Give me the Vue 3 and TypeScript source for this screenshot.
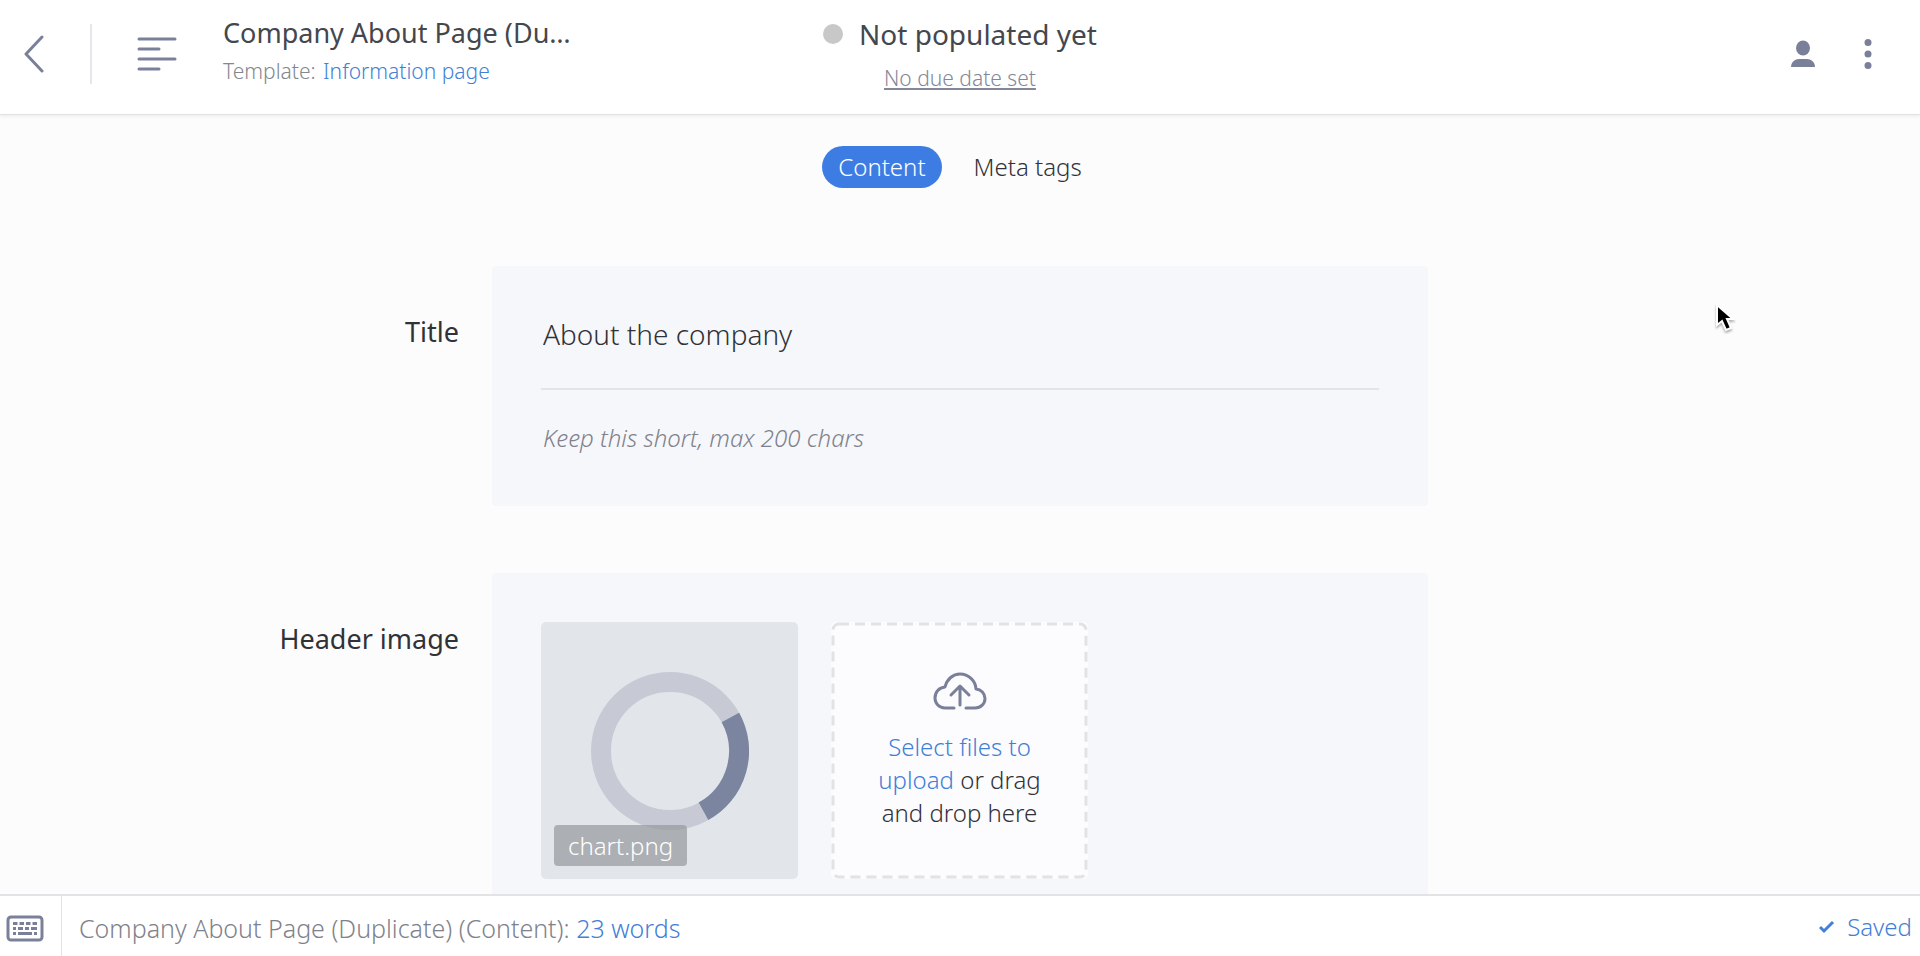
<script setup lang="ts">
import { ref } from 'vue'

type TabId = 'content' | 'meta'

interface Tab {
  id: TabId
  label: string
}

const tabs: Tab[] = [
  { id: 'content', label: 'Content' },
  { id: 'meta', label: 'Meta tags' },
]

const activeTab = ref<TabId>('content')
const pageName = 'Company About Page (Duplicate)'
const title = ref('About the company')
const fileName = 'chart.png'
const wordCount = 23
</script>

<template>
  <div class="app">
    <header class="topbar">
      <div class="topbar-left">
        <button class="icon-button back" type="button" aria-label="Back">
          <svg width="20" height="38" viewBox="0 0 20 38" fill="none" stroke="currentColor" stroke-width="3" stroke-linecap="round" stroke-linejoin="round">
            <path d="M18 2 2 19l16 17" />
          </svg>
        </button>
        <span class="divider"></span>
        <button class="icon-button menu" type="button" aria-label="Page list">
          <svg width="40" height="36" viewBox="0 0 40 36" fill="none" stroke="currentColor" stroke-width="3" stroke-linecap="round">
            <path d="M2 3h36M2 13h20M2 23h36M2 33h20" />
          </svg>
        </button>
        <div class="page-info">
          <h1 class="page-name">{{ pageName }}</h1>
          <p class="template">Template: <a href="#template">Information page</a></p>
        </div>
      </div>

      <div class="status">
        <button class="status-name" type="button"><span class="dot"></span>Not populated yet</button>
        <a class="due" href="#due">No due date set</a>
      </div>

      <div class="topbar-right">
        <button class="icon-button" type="button" aria-label="Assigned people">
          <svg width="24" height="28" viewBox="0 0 24 28" fill="currentColor">
            <ellipse cx="12" cy="8" rx="7" ry="7.5" />
            <path d="M0 27c0-5 4-8 8-8h8c4 0 8 3 8 8z" />
          </svg>
        </button>
        <button class="icon-button" type="button" aria-label="More options">
          <svg width="8" height="32" viewBox="0 0 8 32" fill="currentColor">
            <circle cx="4" cy="4.5" r="3.5" />
            <circle cx="4" cy="16" r="3.5" />
            <circle cx="4" cy="27.5" r="3.5" />
          </svg>
        </button>
      </div>
    </header>

    <main class="content">
      <nav class="tabs">
        <button
          v-for="tab in tabs"
          :key="tab.id"
          type="button"
          class="tab"
          :class="{ active: tab.id === activeTab }"
          @click="activeTab = tab.id"
        >{{ tab.label }}</button>
      </nav>

      <section class="field">
        <label class="field-label" for="title-input">Title</label>
        <div class="card">
          <input id="title-input" v-model="title" class="text-input" type="text" aria-describedby="title-hint" />
          <p id="title-hint" class="hint">Keep this short, max 200 chars</p>
        </div>
      </section>

      <section class="field">
        <label class="field-label" for="image-input">Header image</label>
        <div class="card files">
          <div class="thumb">
            <svg class="spinner" width="158" height="158" viewBox="0 0 158 158" fill="none" stroke-width="20">
              <circle cx="79" cy="79" r="69" stroke="#c7cad4" />
              <path d="M139.400 45.500A69 69 0 0 1 112.500 139.300" stroke="#7b859f" />
            </svg>
            <span class="file-name">{{ fileName }}</span>
          </div>
          <label class="dropzone" for="image-input">
            <svg class="dash" width="100%" height="100%" aria-hidden="true">
              <rect class="dash-line" x="2" y="2" rx="6" />
            </svg>
            <svg class="cloud" width="54" height="38" viewBox="0 0 54 38" fill="none" stroke="currentColor" stroke-width="3" stroke-linecap="round" stroke-linejoin="round">
              <path d="M21 36h-9C6 36 2 31.500 2 26c0-6 4-10.500 10-11C14 7 20 2 27 2c8.500 0 15.500 6.500 16 15 5 .5 9 4.500 9 9.500S48 36 42 36h-9" />
              <path d="M27 33V14M18 23l9-9 9 9" />
            </svg>
            <span class="drop-text"><span class="select">Select files to upload</span> or drag and drop here</span>
            <input id="image-input" class="file-input" type="file" />
          </label>
        </div>
      </section>
    </main>

    <footer class="bottombar">
      <button class="icon-button keyboard" type="button" aria-label="Keyboard shortcuts">
        <svg width="38" height="27" viewBox="0 0 38 27" fill="none" stroke="currentColor">
          <rect x="2" y="2" width="34" height="23" rx="3" stroke-width="3" />
          <path d="M7 8.500h24" stroke-width="3" stroke-dasharray="4.500 2" />
          <path d="M7 13.500h24" stroke-width="3" stroke-dasharray="3 2 5 2 4 2 6" />
          <path d="M7 18.500h3M12 18.500h14M28 18.500h3" stroke-width="3" />
        </svg>
      </button>
      <p class="words">{{ pageName }} (Content): <a href="#words">{{ wordCount }} words</a></p>
      <p class="saved">
        <svg width="16" height="14" viewBox="0 0 16 14" fill="none" stroke="currentColor" stroke-width="3">
          <path d="M1 7l4 4 9-9" />
        </svg>
        Saved
      </p>
    </footer>

    <svg class="cursor" width="24" height="32" viewBox="0 0 24 32" aria-hidden="true">
      <path d="M3 3v20l5-4 4 9 5-2-4-9h6z" fill="#000" stroke="#fff" stroke-width="2" />
    </svg>
  </div>
</template>

<style>
body {
  margin: 0;
}
</style>

<style scoped>
.app {
  display: flex;
  flex-direction: column;
  height: 100vh;
  overflow: hidden;
  background: #fcfcfc;
  color: #303238;
  font-family: "Noto Sans", "Open Sans", sans-serif;
  font-size: 24px;
  font-weight: 300;
}

.app * {
  box-sizing: border-box;
}

h1,
p {
  margin: 0;
}

a {
  color: #437fd6;
  text-decoration: none;
}

button {
  padding: 0;
  border: 0;
  background: none;
  color: inherit;
  font: inherit;
  cursor: pointer;
}

.icon-button {
  display: flex;
  flex: none;
  color: #7b809a;
}

.topbar {
  position: relative;
  display: grid;
  grid-template-columns: 1fr auto 1fr;
  flex: none;
  height: 115px;
  background: #fff;
  border-bottom: 1px solid #e1e2e4;
  box-shadow: 0 1px 4px rgba(0, 0, 0, 0.08);
}

.topbar-left {
  display: flex;
  align-items: center;
  min-width: 0;
  padding: 0 24px 6px;
}

.divider {
  flex: none;
  width: 2px;
  height: 60px;
  margin: 0 45px 0 46px;
  background: #e6e7ea;
}

.page-info {
  width: 352px;
  min-width: 0;
  margin-left: 46px;
  padding-bottom: 6px;
}

.page-name {
  overflow: hidden;
  color: #44474d;
  font-size: 27px;
  font-weight: 400;
  line-height: 40px;
  text-overflow: ellipsis;
  white-space: nowrap;
}

.template {
  color: #84878f;
  font-size: 21px;
  line-height: 36px;
  white-space: nowrap;
}

.template a {
  margin-left: 2px;
}

.status {
  display: flex;
  flex-direction: column;
  align-items: center;
  padding-top: 14px;
}

.status-name {
  display: flex;
  align-items: center;
  gap: 16px;
  color: #44474d;
  font-size: 28px;
  font-weight: 400;
  line-height: 40px;
}

.dot {
  width: 20px;
  height: 20px;
  border-radius: 50%;
  background: #c8c8c8;
}

.due {
  color: #84879a;
  font-size: 21px;
  line-height: 48px;
  text-decoration: underline;
}

.topbar-right {
  display: flex;
  align-items: center;
  justify-content: flex-end;
  gap: 49px;
  padding: 0 48px 6px 0;
}

.content {
  flex: 1;
  min-height: 0;
  overflow: hidden;
}

.tabs {
  display: flex;
  justify-content: center;
  gap: 16px;
  padding: 31px 0 78px;
}

.tab {
  height: 42px;
  padding: 0 16px;
  border-radius: 21px;
  line-height: 40px;
}

.tab.active {
  background: #3d7de3;
  color: #fff;
}

.field {
  display: grid;
  grid-template-columns: 1fr minmax(0, 936px) 1fr;
  margin-bottom: 67px;
}

.field-label {
  padding: 46px 33px 0 0;
  font-size: 27px;
  font-weight: 400;
  line-height: 40px;
  text-align: right;
}

.card {
  padding: 49px;
  border-radius: 4px;
  background: #f6f7fb;
}

.text-input {
  display: block;
  width: 100%;
  height: 75px;
  padding: 0 2px 36px;
  border: 0;
  border-bottom: 2px solid #e2e4e9;
  outline: 0;
  background: none;
  color: inherit;
  font: inherit;
  font-size: 28px;
}

.hint {
  height: 67px;
  padding: 30px 2px 0;
  color: #7f828c;
  font-style: italic;
  line-height: 36px;
}

.files {
  display: flex;
  gap: 33px;
}

.thumb,
.dropzone {
  position: relative;
  flex: none;
  width: 257px;
  height: 257px;
  border-radius: 5px;
}

.thumb {
  display: flex;
  align-items: center;
  justify-content: center;
  background: #e2e5ea;
}

.file-name {
  position: absolute;
  bottom: 13px;
  left: 13px;
  padding: 0 14px;
  border-radius: 4px;
  background: rgba(150, 152, 156, 0.7);
  color: #fff;
  line-height: 41px;
}

.dropzone {
  display: flex;
  flex-direction: column;
  align-items: center;
  padding: 50px 40px 0;
  background: #fcfcfe;
  text-align: center;
  cursor: pointer;
}

.dash {
  position: absolute;
  inset: 0;
}

.dash-line {
  width: calc(100% - 4px);
  height: calc(100% - 4px);
  fill: none;
  stroke: #e2e2e5;
  stroke-width: 3px;
  stroke-dasharray: 10 6;
}

.cloud {
  flex: none;
  color: #7b809a;
}

.drop-text {
  margin-top: 20px;
  line-height: 33px;
}

.select {
  color: #437fd6;
}

.file-input {
  position: absolute;
  width: 1px;
  height: 1px;
  opacity: 0;
}

.bottombar {
  display: flex;
  flex: none;
  align-items: stretch;
  height: 62px;
  padding-right: 8px;
  border-top: 2px solid #e2e3e6;
  background: #fff;
  font-size: 25px;
  line-height: 64px;
  white-space: nowrap;
}

.keyboard {
  align-items: center;
  padding: 4px 17px 0 6px;
  border-right: 1px solid #e2e3e6;
}

.words {
  flex: 1;
  padding-left: 17px;
  color: #7f828c;
}

.saved {
  display: flex;
  align-items: center;
  gap: 12px;
  padding-top: 2px;
  color: #437fd6;
  font-size: 24px;
}

.cursor {
  position: absolute;
  top: 302px;
  left: 1714px;
  filter: drop-shadow(0 2px 1px rgba(0, 0, 0, 0.3));
  pointer-events: none;
}
</style>
